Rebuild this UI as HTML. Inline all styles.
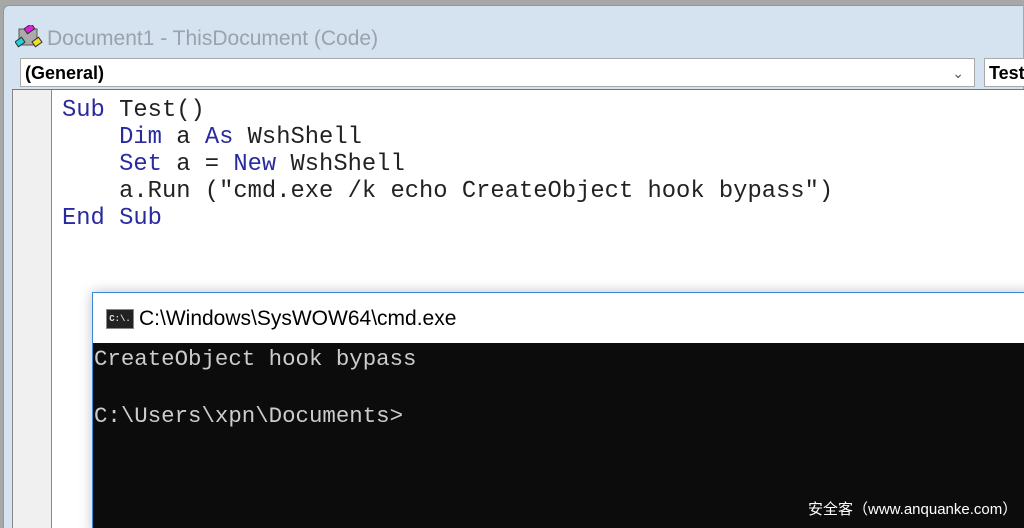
<!DOCTYPE html>
<html style="overflow:hidden;height:528px"><head><meta charset="utf-8"><style>
body{margin:0;width:1024px;height:528px;overflow:hidden;background:#a7a7a7;position:relative;font-family:"Liberation Sans",sans-serif}
.frame{position:absolute;left:3px;top:5px;width:1019px;height:522px;background:#d5e2ef;border-top-left-radius:6px;border:1px solid #8a9aab;border-right:none;border-bottom:none}
.title{position:absolute;left:47px;top:27px;font-size:21px;color:#9aa3ad}
.dd{position:absolute;top:58px;height:29px;background:#fff;border:1px solid #a9a9a9;font-weight:bold;font-size:18px;line-height:29px;box-sizing:border-box;padding-left:4px}
.code{position:absolute;left:12px;top:89px;width:1012px;height:439px;background:#fff;border-top:1px solid #777}
.margin{position:absolute;left:0;top:0;width:38px;height:439px;background:#f0f0f0;border-left:1px solid #888;border-right:1px solid #888}
pre{margin:0;font-family:"Liberation Mono",monospace;font-size:23.8px;line-height:27px;color:#222;position:absolute;left:50px;top:7px}
.k{color:#2a2aa0}
.cmd{position:absolute;left:92px;top:292px;width:940px;height:240px;border:1px solid #3b8ad8;background:#0c0c0c;box-shadow:0 0 12px rgba(0,0,0,.25)}
.ct{height:50px;background:#fff;position:relative}
.ct span{position:absolute;left:46px;top:14px;font-size:21px;color:#000}
.ico{position:absolute;left:13px;top:16px;width:26px;height:18px;background:#222;border:1px solid #888;color:#ddd;font:bold 9px "Liberation Mono",monospace;line-height:18px;text-align:center}
.cmd pre{color:#cccccc;font-size:22.4px;line-height:28.5px;left:1px;top:52px}
.wm{position:absolute;left:808px;top:498px;color:#fff;font-size:15px;font-family:"Liberation Sans","Noto Sans CJK SC",sans-serif}
</style></head><body>
<div class="frame"></div>
<svg style="position:absolute;left:15px;top:25px" width="28" height="24"><rect x="4" y="4" width="18" height="16" fill="#aaa" stroke="#555"/><rect x="10" y="1" width="9" height="6" fill="#e020e0" stroke="#333" transform="rotate(-35 14 4)"/><rect x="1" y="14" width="8" height="6" fill="#20d0e0" stroke="#333" transform="rotate(-35 5 17)"/><rect x="18" y="14" width="8" height="6" fill="#f0e020" stroke="#333" transform="rotate(-35 22 17)"/></svg>
<div class="title">Document1 - ThisDocument (Code)</div>
<div class="dd" style="left:20px;width:955px">(General)<span style="position:absolute;right:10px;top:0;font-weight:normal;color:#555;font-size:14px">&#8964;</span></div>
<div class="dd" style="left:984px;width:50px">Test</div>
<div class="code"><div class="margin"></div>
<pre><span class="k">Sub</span> Test()
    <span class="k">Dim</span> a <span class="k">As</span> WshShell
    <span class="k">Set</span> a = <span class="k">New</span> WshShell
    a.Run ("cmd.exe /k echo CreateObject hook bypass")
<span class="k">End Sub</span></pre></div>
<div class="cmd"><div class="ct"><div class="ico">C:\.</div><span>C:\Windows\SysWOW64\cmd.exe</span></div>
<pre>CreateObject hook bypass

C:\Users\xpn\Documents&gt;</pre></div>
<div class="wm">安全客（www.anquanke.com）</div>
</body></html>
